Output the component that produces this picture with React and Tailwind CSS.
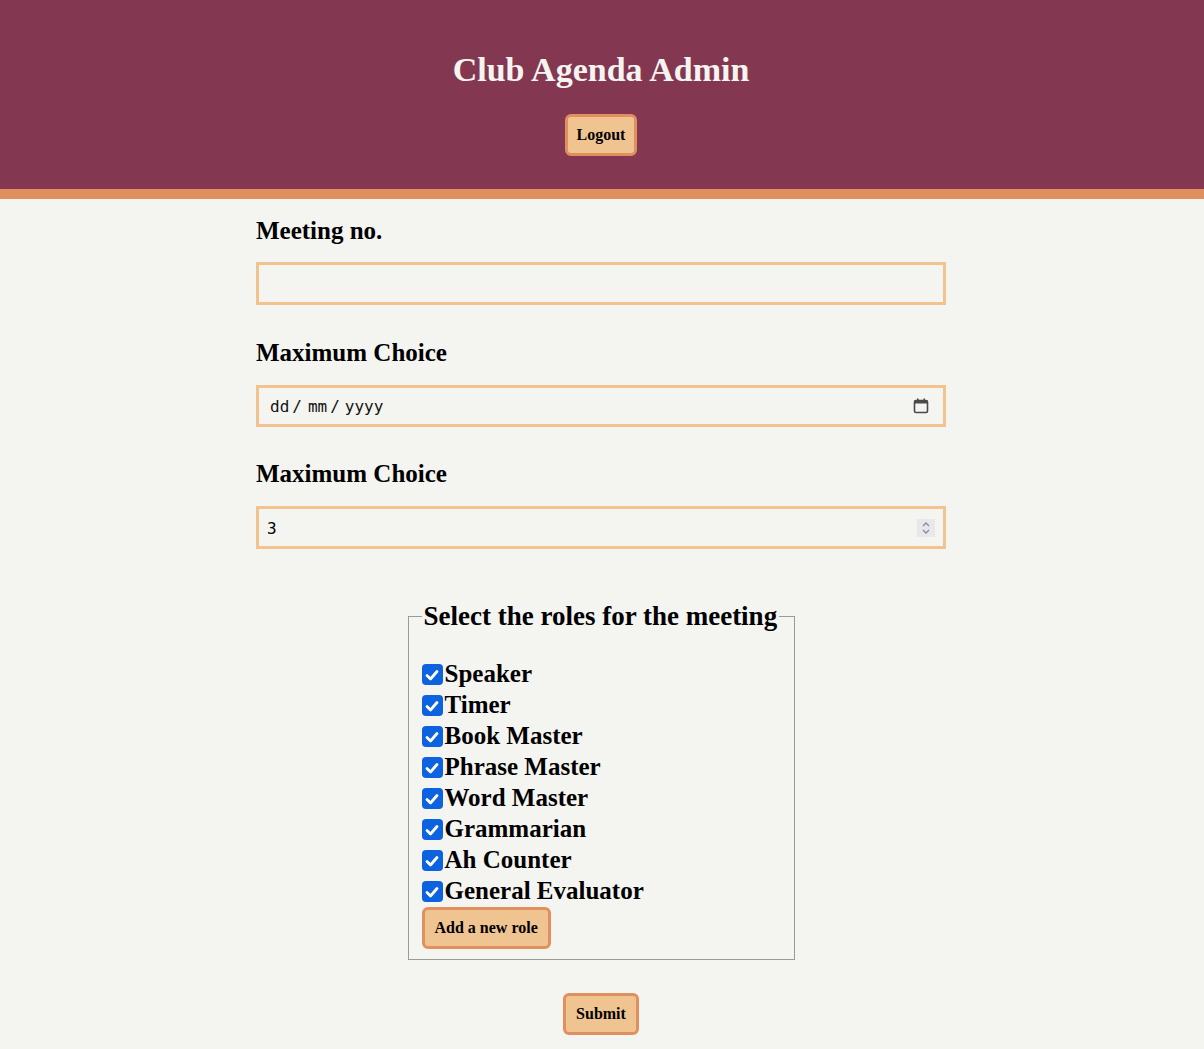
import React from "react";

const roles = [
  "Speaker",
  "Timer",
  "Book Master",
  "Phrase Master",
  "Word Master",
  "Grammarian",
  "Ah Counter",
  "General Evaluator",
];

const serif = "font-['Liberation_Serif',serif]";
const mono = "font-['DejaVu_Sans_Mono',monospace]";

function Check() {
  return (
    <span className="inline-flex w-[21px] h-[21px] rounded-[4px] bg-[#0d62e0] items-center justify-center shrink-0 translate-y-[6px]">
      <svg width="16" height="16" viewBox="0 0 16 16" fill="none">
        <path d="M3 8.5 L6.5 12 L13 4.5" stroke="white" strokeWidth="2.8" strokeLinecap="round" strokeLinejoin="round" />
      </svg>
    </span>
  );
}

function Btn({ children, wide }) {
  return (
    <button
      className={`${serif} bg-[#f0c490] border-[3px] border-[#e0905f] rounded-[6px] ${wide ? "px-[10px]" : "px-[9px]"} h-[42px] text-[16px] font-bold text-black whitespace-nowrap`}
    >
      {children}
    </button>
  );
}

export default function App() {
  return (
    <div className={`min-h-screen bg-[#f4f4f0] text-black ${serif}`}>
      <header className="bg-[#843750] border-b-[10px] border-[#e0905f] h-[199px] flex flex-col items-center pt-[50px] pr-[2px]">
        <h1 className="text-[34px] leading-[40px] font-bold text-[#f4f4f0]">Club Agenda Admin</h1>
        <div className="mt-[24px]">
          <Btn>Logout</Btn>
        </div>
      </header>

      <div className="flex justify-center pr-[2px]">
        <main className="w-[690px] pt-[16px] pb-[14px] flex flex-col">
          <label className="text-[25px] leading-[32px] font-bold">Meeting no.</label>
          <input
            type="text"
            className={`${mono} mt-[15px] h-[43px] w-full border-[3px] border-[#f2c28f] bg-[#f4f4f0] px-[8px] text-[16px] outline-none`}
          />

          <label className="mt-[32px] text-[25px] leading-[32px] font-bold">Maximum Choice</label>
          <div className={`${mono} relative mt-[16px] h-[42px] w-full border-[3px] border-[#f2c28f] flex items-center pl-[11px] pt-[2px] text-[16px] text-[#111]`}>
            <span>dd</span>
            <span className="ml-[3px] mr-[6px]">/</span>
            <span>mm</span>
            <span className="ml-[3px] mr-[5px]">/</span>
            <span>yyyy</span>
            <svg className="absolute right-[13px] top-[9px]" width="18" height="18" viewBox="0 0 18 18" fill="none">
              <rect x="2.5" y="3.5" width="13" height="12" rx="1.5" stroke="#4a4a4a" strokeWidth="1.6" />
              <rect x="2.5" y="3.5" width="13" height="3" fill="#4a4a4a" />
              <rect x="5" y="1.5" width="1.6" height="3" fill="#4a4a4a" />
              <rect x="11.4" y="1.5" width="1.6" height="3" fill="#4a4a4a" />
            </svg>
          </div>

          <label className="mt-[31px] text-[25px] leading-[32px] font-bold">Maximum Choice</label>
          <div className={`${mono} relative mt-[16px] h-[43px] w-full border-[3px] border-[#f2c28f] flex items-center pl-[8px] pt-[2px] text-[16px]`}>
            <span>3</span>
            <span className="absolute right-[8px] top-[10px] w-[18px] h-[18px] bg-[#e8e8ec] flex items-center justify-center">
              <svg width="10" height="14" viewBox="0 0 10 14" fill="none">
                <path d="M2 5 L5 2 L8 5" stroke="#8a8a9a" strokeWidth="1.4" />
                <path d="M2 9 L5 12 L8 9" stroke="#8a8a9a" strokeWidth="1.4" />
              </svg>
            </span>
          </div>

          <fieldset className="self-center mt-[51px] w-[387px] border border-[#9a9a9a] px-[13px] pb-[10px] pt-[0px]">
            <legend className="text-[27px] leading-[32px] font-bold px-[2px] whitespace-nowrap">Select the roles for the meeting</legend>
            <div className="mt-[26px] flex flex-col">
              {roles.map((r) => (
                <label key={r} className="flex items-start h-[31px] text-[25px] leading-[31px] font-bold">
                  <Check />
                  <span className="ml-[2px]">{r}</span>
                </label>
              ))}
            </div>
            <div className="mt-[1px]">
              <Btn wide>Add a new role</Btn>
            </div>
          </fieldset>

          <div className="self-center mt-[33px]">
            <Btn wide>Submit</Btn>
          </div>
        </main>
      </div>
    </div>
  );
}
